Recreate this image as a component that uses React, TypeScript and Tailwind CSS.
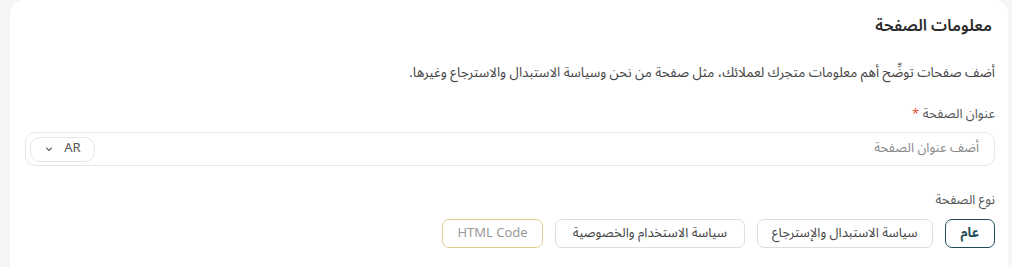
import React from "react";

export default function App() {
  const font = { fontFamily: '"Noto Sans Arabic", "Noto Sans", "DejaVu Sans", sans-serif' };
  return (
    <div className="w-[1012px] h-[267px] bg-[#f5f5f5] overflow-hidden" style={font}>
      <div dir="rtl" className="ml-[10px] mr-[4px] h-[300px] bg-white rounded-t-[14px] pl-[15px] pr-[13px] pt-[14px]">
        <h2 className="text-[16px] leading-6 font-semibold text-[#2b2b2b] pr-[3px]">معلومات الصفحة</h2>
        <p className="mt-[25px] text-[13.4px] leading-5 text-[#444]">
          أضف صفحات توضِّح أهم معلومات متجرك لعملائك، مثل صفحة من نحن وسياسة الاستبدال والاسترجاع وغيرها.
        </p>
        <div className="mt-[21px] text-[13px] leading-5 text-[#555]">
          عنوان الصفحة <span className="text-[#e5533d]">*</span>
        </div>
        <div className="mt-[8px] h-[34px] border border-[#e6e6e6] rounded-[10px] flex items-center pr-[15px] pl-[4px]">
          <span className="flex-1 text-[13px] text-[#888]">أضف عنوان الصفحة</span>
          <div dir="ltr" className="h-[25px] w-[65px] border border-[#e6e6e6] rounded-[10px] flex items-center justify-center gap-[10px] text-[13px] text-[#555]">
            <svg width="10" height="10" viewBox="0 0 10 10" fill="none" stroke="#666" strokeWidth="1.1" strokeLinecap="round" strokeLinejoin="round">
              <path d="M2.5 4l2.5 2.5L7.5 4" />
            </svg>
            <span>AR</span>
          </div>
        </div>
        <div className="mt-[24px] text-[13px] leading-5 text-[#555]">نوع الصفحة</div>
        <div className="mt-[9px] flex gap-[12px] text-[13px]">
          <button className="h-[29px] px-[15px] rounded-[7px] border border-[#1e4d57] text-[#1e4d57] font-bold">عام</button>
          <button className="h-[29px] px-[14px] rounded-[7px] border border-[#dedede] text-[#444]">سياسة الاستبدال والإسترجاع</button>
          <button className="h-[29px] px-[17px] rounded-[7px] border border-[#dedede] text-[#444]">سياسة الاستخدام والخصوصية</button>
          <button dir="ltr" className="h-[29px] px-[14px] rounded-[7px] border border-[#e3cf94] text-[#999]">HTML Code</button>
        </div>
      </div>
    </div>
  );
}
